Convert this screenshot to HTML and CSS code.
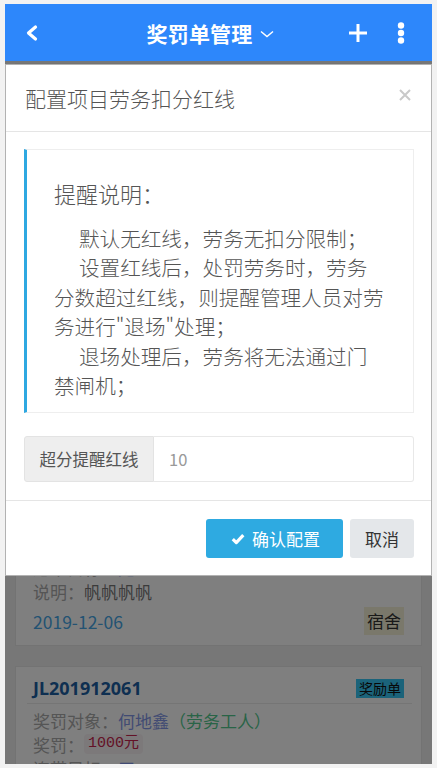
FILE: index.html
```html
<!DOCTYPE html>
<html lang="zh-CN">
<head>
    <meta charset="UTF-8">
    <meta name="viewport" content="width=device-width, initial-scale=1.0">
    <title>奖罚单管理</title>
    <link rel="stylesheet" href="styles.css">
</head>
<body>
    <div class="app">
        <!-- 顶部导航 -->
        <header class="topbar">
            <a class="back" href="#">
                <svg width="14" height="18" viewBox="0 0 14 18"><path d="M10.5 3 L3.5 9 L10.5 15" fill="none" stroke="#fff" stroke-width="3.2" stroke-linecap="round" stroke-linejoin="round"/></svg>
            </a>
            <div class="title">奖罚单管理<svg class="caret" width="14" height="8" viewBox="0 0 14 8"><path d="M1 1.5 L7 6.5 L13 1.5" fill="none" stroke="#fff" stroke-width="1.5"/></svg></div>
            <div class="actions">
                <svg width="20" height="20" viewBox="0 0 20 20"><path d="M10 1 V19 M1 10 H19" stroke="#fff" stroke-width="3"/></svg>
                <svg width="8" height="22" viewBox="0 0 8 22"><circle cx="4" cy="3.5" r="3.2" fill="#fff"/><circle cx="4" cy="11" r="3.2" fill="#fff"/><circle cx="4" cy="18.5" r="3.2" fill="#fff"/></svg>
            </div>
        </header>

        <!-- 奖罚单列表 -->
        <div class="list">
            <div class="card">
                <div class="card-head"><span class="no">JL201912063</span><span class="tag tag-reward">奖励单</span></div>
                <div class="card-body">
                    <p>奖罚对象：<span class="name">何地鑫</span><span class="role">（劳务工人）</span></p>
                    <p>奖罚：<code>500元</code></p>
                    <p>连带目标：<span class="name">无</span></p>
                    <p>说明：<span class="val">帆帆帆帆</span></p>
                    <div class="card-foot"><span class="date">2019-12-06</span><span class="tag tag-place">宿舍</span></div>
                </div>
            </div>
            <div class="card">
                <div class="card-head"><span class="no">JL201912062</span><span class="tag tag-reward">奖励单</span></div>
                <div class="card-body">
                    <p>奖罚对象：<span class="name">何地鑫</span><span class="role">（劳务工人）</span></p>
                    <p>奖罚：<code>800元</code></p>
                    <p>连带目标：<span class="name">无</span></p>
                    <p>说明：<span class="val">帆帆帆帆</span></p>
                    <div class="card-foot"><span class="date">2019-12-06</span><span class="tag tag-place">宿舍</span></div>
                </div>
            </div>
            <div class="card">
                <div class="card-head"><span class="no">JL201912064</span><span class="tag tag-reward">奖励单</span></div>
                <div class="card-body">
                    <p>奖罚对象：<span class="name">何地鑫</span><span class="role">（劳务工人）</span></p>
                    <p>奖罚：<code>1000元</code></p>
                    <p>连带目标：<span class="name">无</span></p>
                    <p>说明：<span class="val">帆帆帆帆</span></p>
                    <div class="card-foot"><span class="date">2019-12-06</span><span class="tag tag-place">宿舍</span></div>
                </div>
            </div>
            <div class="card">
                <div class="card-head"><span class="no">JL201912061</span><span class="tag tag-reward">奖励单</span></div>
                <div class="card-body">
                    <p>奖罚对象：<span class="name">何地鑫</span><span class="role">（劳务工人）</span></p>
                    <p>奖罚：<code>1000元</code></p>
                    <p>连带目标：<span class="name">无</span></p>
                    <p>说明：<span class="val">帆帆帆帆</span></p>
                    <div class="card-foot"><span class="date">2019-12-06</span><span class="tag tag-place">宿舍</span></div>
                </div>
            </div>
        </div>

        <!-- 弹窗 -->
        <div class="mask"></div>
        <div class="modal">
            <div class="modal-header">
                <h4>配置项目劳务扣分红线</h4>
                <svg class="close" width="14" height="14" viewBox="0 0 14 14"><path d="M2 2 L12 12 M12 2 L2 12" stroke="#c9c9c9" stroke-width="2"/></svg>
            </div>
            <div class="modal-body">
                <div class="callout">
                    <h3>提醒说明：</h3>
                    <p>默认无红线，劳务无扣分限制；</p>
                    <p>设置红线后，处罚劳务时，劳务分数超过红线，则提醒管理人员对劳务进行"退场"处理；</p>
                    <p>退场处理后，劳务将无法通过门禁闸机；</p>
                </div>
                <div class="input-group">
                    <span class="addon">超分提醒红线</span>
                    <input type="number" value="10">
                </div>
            </div>
            <div class="modal-footer">
                <button class="btn btn-primary">
                    <svg width="14" height="12" viewBox="0 0 14 12"><path d="M1.8 6.2 L5.3 9.6 L12.3 2.2" fill="none" stroke="#fff" stroke-width="3.2" stroke-linejoin="round"/></svg>
                    确认配置
                </button>
                <button class="btn btn-default">取消</button>
            </div>
        </div>
    </div>
</body>
</html>
```

FILE: styles.css
```css
* {
    margin: 0;
    padding: 0;
    box-sizing: border-box;
    font-family: "Noto Sans CJK SC", "Noto Sans", sans-serif;
}

body {
    background-color: #f2f2f2;
    padding: 4px 5px;
    color: #555;
}

.app {
    position: relative;
    width: 427px;
    height: 760px;
    overflow: hidden;
    background-color: #eeeeee;
}

/* 顶部导航 */
.topbar {
    display: grid;
    grid-template-columns: 80px 1fr 97px;
    align-items: center;
    height: 57px;
    background-color: #2d87fb;
    color: #fff;
}

.back {
    display: flex;
    align-items: center;
    padding-left: 20px;
}

.title {
    display: flex;
    align-items: center;
    justify-content: center;
    font-size: 21px;
    font-weight: bold;
    letter-spacing: 0.2px;
}

.title .caret {
    margin-left: 7px;
    margin-top: 2px;
}

.actions {
    display: flex;
    align-items: center;
    gap: 29px;
    padding-left: 13px;
}

/* 列表 */
.list {
    padding: 2px 10px;
}

.card {
    background-color: #fff;
    border: 1px solid #e6e6e6;
    padding: 0 9px 10px 11px;
    margin-bottom: 20px;
}

.card-head {
    display: flex;
    justify-content: space-between;
    align-items: center;
    height: 37px;
    padding: 9px 8px 3px 6px;
    border-bottom: 1px solid #eaeaea;
}

.no {
    font-family: "Noto Sans", sans-serif;
    font-size: 18px;
    font-weight: bold;
    line-height: 24px;
    color: #1c5fa3;
}

.tag-reward {
    background-color: #36c6f4;
    font-size: 14px;
    line-height: 19px;
    padding: 0 3px;
    color: #111;
}

.tag-place {
    background-color: #f5f0d6;
    font-size: 17px;
    line-height: 28px;
    padding: 0 3px;
    color: #333;
}

.card-body {
    padding: 4px 8px 0 6px;
    font-size: 17px;
    color: #aaa;
}

.card-body p {
    display: flex;
    align-items: center;
    height: 24px;
    white-space: nowrap;
}

.name {
    color: #8296e6;
}

.role {
    color: #52c88e;
}

.val {
    color: #777;
}

code {
    font-family: "Liberation Mono", monospace;
    font-size: 15px;
    line-height: 20px;
    color: #c7254e;
    background-color: #f9f2f4;
    border-radius: 4px;
    padding: 0 4px;
}

.card-foot {
    display: flex;
    justify-content: space-between;
    align-items: center;
    height: 28px;
    margin-top: 4px;
}

.date {
    font-size: 17.5px;
    color: #46a6e6;
}

/* 弹窗 */
.mask {
    position: absolute;
    top: 57px;
    left: 0;
    right: 0;
    bottom: 0;
    background-color: rgba(0, 0, 0, 0.5);
}

.modal {
    position: absolute;
    top: 60px;
    left: 0;
    right: 0;
    background-color: #fff;
    border: 1px solid rgba(0, 0, 0, 0.3);
}

.modal-header {
    display: flex;
    justify-content: space-between;
    align-items: flex-start;
    padding: 18px 19px;
    border-bottom: 1px solid #e5e5e5;
}

.modal-header h4 {
    font-size: 21px;
    font-weight: 300;
    line-height: 30px;
    color: #555;
}

.close {
    margin-top: 5px;
}

.modal-body {
    padding: 17px 17px 18px 18px;
}

.callout {
    border: 1px solid #eeeeee;
    border-left: 3px solid #2ea8e1;
    padding: 27px 29px 12px 27px;
}

.callout h3 {
    font-size: 22px;
    font-weight: 300;
    line-height: 33px;
    color: #555;
    margin-bottom: 14px;
}

.callout p {
    font-size: 20.6px;
    font-weight: 300;
    line-height: 29.4px;
    text-indent: 25px;
    color: #555;
}

.input-group {
    display: flex;
    margin-top: 23px;
    height: 46px;
}

.addon {
    width: 130px;
    display: flex;
    align-items: center;
    justify-content: center;
    background-color: #eeeeee;
    border: 1px solid #e3e3e3;
    border-radius: 3px 0 0 3px;
    font-size: 16.5px;
    color: #555;
}

.input-group input {
    flex: 1;
    min-width: 0;
    border: 1px solid #e8e8e8;
    border-left: none;
    border-radius: 0 3px 3px 0;
    padding-left: 15px;
    font-size: 16.5px;
    color: #999;
    outline: none;
    -moz-appearance: textfield;
}

.input-group input::-webkit-inner-spin-button {
    -webkit-appearance: none;
}

.modal-footer {
    display: flex;
    justify-content: flex-end;
    gap: 7px;
    padding: 18px 17px 17px;
    border-top: 1px solid #e5e5e5;
}

.btn {
    height: 39px;
    border: none;
    border-radius: 3px;
    font-size: 17px;
    display: flex;
    align-items: center;
    cursor: pointer;
}

.btn-primary {
    background-color: #2eaae1;
    color: #fff;
    padding: 0 23px 0 25px;
    gap: 7px;
}

.btn-default {
    background-color: #e4e7ea;
    color: #333;
    padding: 0 15px;
}
```
